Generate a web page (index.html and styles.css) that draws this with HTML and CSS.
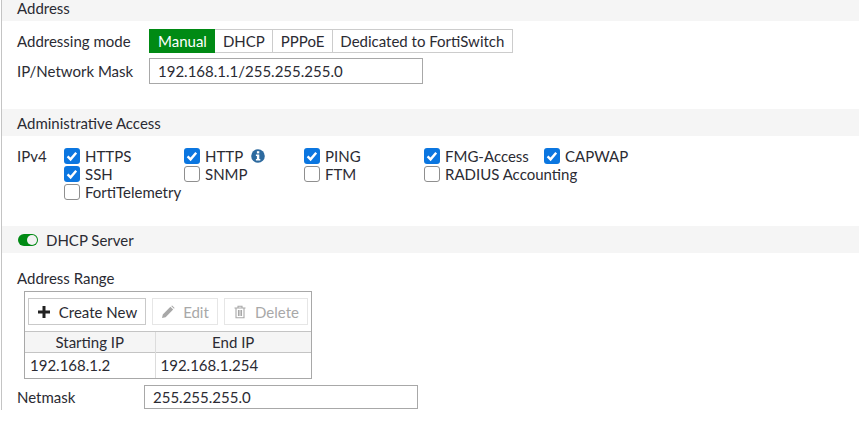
FILE: index.html
```html
<!DOCTYPE html>
<html lang="en">
<head>
<meta charset="utf-8">
<title>Interface</title>
<link rel="stylesheet" href="styles.css">
</head>
<body>
<main class="panel">
  <h2 class="section section-first">Address</h2>
  <div class="row row-mode">
    <span class="label">Addressing mode</span>
    <div class="modes">
      <span class="mode mode-on">Manual</span>
      <span class="mode">DHCP</span>
      <span class="mode">PPPoE</span>
      <span class="mode">Dedicated to FortiSwitch</span>
    </div>
  </div>
  <div class="row row-ip">
    <span class="label">IP/Network Mask</span>
    <div class="input input-ip">192.168.1.1/255.255.255.0</div>
  </div>

  <h2 class="section section-admin">Administrative Access</h2>
  <div class="access">
    <span class="label-ipv4">IPv4</span>
    <div class="checks">
      <label class="check"><span class="box on"><svg viewBox="0 0 16 16"><path d="M3.6 8.4l3 3 5.6-6.6" fill="none" stroke="#fff" stroke-width="2.4"/></svg></span>HTTPS</label>
      <label class="check"><span class="box on"><svg viewBox="0 0 16 16"><path d="M3.6 8.4l3 3 5.6-6.6" fill="none" stroke="#fff" stroke-width="2.4"/></svg></span>HTTP<svg class="info" viewBox="0 0 14 14"><circle cx="7" cy="7" r="6.8" fill="#2d6a9f"/><rect x="5.9" y="2.2" width="2.4" height="2.2" fill="#fff"/><path d="M4.9 5.4h3.4v4.6h1v1.5H4.9V10h1V6.9H4.9z" fill="#fff"/></svg></label>
      <label class="check"><span class="box on"><svg viewBox="0 0 16 16"><path d="M3.6 8.4l3 3 5.6-6.6" fill="none" stroke="#fff" stroke-width="2.4"/></svg></span>PING</label>
      <label class="check"><span class="box on"><svg viewBox="0 0 16 16"><path d="M3.6 8.4l3 3 5.6-6.6" fill="none" stroke="#fff" stroke-width="2.4"/></svg></span>FMG-Access</label>
      <label class="check"><span class="box on"><svg viewBox="0 0 16 16"><path d="M3.6 8.4l3 3 5.6-6.6" fill="none" stroke="#fff" stroke-width="2.4"/></svg></span>CAPWAP</label>
      <label class="check"><span class="box on"><svg viewBox="0 0 16 16"><path d="M3.6 8.4l3 3 5.6-6.6" fill="none" stroke="#fff" stroke-width="2.4"/></svg></span>SSH</label>
      <label class="check"><span class="box"></span>SNMP</label>
      <label class="check"><span class="box"></span>FTM</label>
      <label class="check check-wide"><span class="box"></span>RADIUS Accounting</label>
      <label class="check check-wide"><span class="box"></span>FortiTelemetry</label>
    </div>
  </div>

  <h2 class="section section-dhcp"><span class="toggle"><span class="knob"></span></span>DHCP Server</h2>
  <div class="range-label">Address Range</div>
  <div class="table-box">
    <div class="toolbar">
      <span class="btn btn-create"><svg class="ico ico-plus" viewBox="0 0 14 14"><path d="M7 1v12M1 7h12" stroke="#222" stroke-width="3" fill="none"/></svg>Create New</span>
      <span class="btn btn-off btn-edit"><svg class="ico" viewBox="0 0 14 14"><path d="M1 13l.8-3.6L9.4 1.8l2.8 2.8-7.6 7.6z M10.2 1l.9-.6 2.5 2.5-.6.9z" fill="#a8a8a8"/></svg>Edit</span>
      <span class="btn btn-off btn-delete"><svg class="ico" viewBox="0 0 14 14"><path d="M1.5 3h11M5 3V1.2h4V3M3 3v9.8h8V3M5.5 5v6M7 5v6M8.5 5v6" fill="none" stroke="#a8a8a8" stroke-width="1.1"/></svg>Delete</span>
    </div>
    <table class="range">
      <thead><tr><th>Starting IP</th><th>End IP</th></tr></thead>
      <tbody><tr><td>192.168.1.2</td><td>192.168.1.254</td></tr></tbody>
    </table>
  </div>
  <div class="row row-netmask">
    <span class="label label-netmask">Netmask</span>
    <div class="input input-netmask">255.255.255.0</div>
  </div>
</main>
</body>
</html>
```
FILE: styles.css
```css
* { box-sizing: border-box; }
html, body { margin: 0; padding: 0; background: #fff; }
body {
  font-family: Lato, "Liberation Sans", sans-serif;
  font-size: 15px;
  color: #2b2b33;
  overflow: hidden;
}
.panel {
  margin-left: 1px;
  height: 410px;
  border-left: 1px solid #c4c4c4;
}
.section {
  margin: 0;
  display: flex;
  align-items: center;
  background: #f5f5f5;
  font-size: 15px;
  font-weight: 400;
  padding-left: 15px;
  height: 27px;
}
.section-first { height: 21px; padding-bottom: 5px; }
.section-admin { margin-top: 25px; }
.section-dhcp { margin-top: 25px; padding-left: 16px; }
.row { display: flex; align-items: center; padding-left: 15px; }
.label { width: 132px; }
.row-mode { margin-top: 8px; height: 24px; }
.row-ip { margin-top: 5px; height: 26px; }
.modes { display: flex; }
.mode {
  height: 24px;
  line-height: 23px;
  padding: 0 7.5px;
  border: 1px solid #ccc;
  border-left: 0;
  white-space: nowrap;
}
.mode-on {
  background: #008a14;
  border: 1px solid #008a14;
  color: #fff;
  padding: 0 7.5px 0 8px;
}
.input {
  border: 1px solid #a8a8a8;
  display: flex;
  align-items: center;
  background: #fff;
}
.input-ip { width: 274px; height: 26px; padding-left: 8px; }
.access { display: flex; padding-left: 15px; margin-top: 12px; height: 53px; }
.label-ipv4 { width: 47px; line-height: 16px; }
.checks {
  display: grid;
  grid-template-columns: repeat(5, 120px);
  grid-auto-rows: 18px;
  align-content: start;
}
.check { display: flex; align-items: center; height: 16px; white-space: nowrap; }
.check:nth-child(6) { grid-column: 1; }
.check:nth-child(10) { grid-column: 1; }
.box {
  flex: none;
  width: 16px;
  height: 16px;
  margin-right: 5px;
  border: 1.5px solid #8f8f8f;
  border-radius: 3px;
  background: #fff;
}
.box.on { background: #0b76e0; border: 0; }
.box svg { display: block; width: 16px; height: 16px; }
.info { width: 14px; height: 14px; margin-left: 8px; }
.toggle {
  position: relative;
  width: 20px;
  height: 12px;
  margin-right: 8px;
  border-radius: 6px;
  background: #008a14;
}
.knob {
  position: absolute;
  right: 1px;
  top: 1px;
  width: 10px;
  height: 10px;
  border-radius: 50%;
  background: #f2f2f2;
}
.range-label { padding-left: 15px; margin-top: 16px; line-height: 18px; }
.table-box {
  margin: 4px 0 0 22px;
  width: 288px;
  border: 1px solid #a8a8a8;
}
.toolbar { display: flex; gap: 6px; padding: 6px 3px 6px 3px; }
.btn {
  display: flex;
  align-items: center;
  justify-content: center;
  height: 27px;
  border: 1px solid #c9c9c9;
}
.btn-create { width: 118px; }
.btn-edit { width: 66px; }
.btn-delete { width: 84px; }
.btn-off { color: #a8a8a8; border-color: #e6e6e6; }
.ico { width: 14px; height: 14px; margin-right: 8px; }
.range { width: 100%; border-collapse: collapse; table-layout: fixed; }
.range th, .range td {
  padding: 0 5px;
  font-weight: 400;
  border-top: 1px solid #c4c4c4;
  border-left: 1px solid #dcdcdc;
}
.range th:first-child, .range td:first-child { border-left: 0; width: 130px; }
.range th { background: #f5f5f5; height: 21px; text-align: center; }
.range td { height: 25px; text-align: left; }
.row-netmask { margin-top: 6px; height: 24px; }
.label-netmask { width: 127px; padding-top: 1px; }
.input-netmask { width: 274px; height: 24px; padding-left: 8px; }
```
